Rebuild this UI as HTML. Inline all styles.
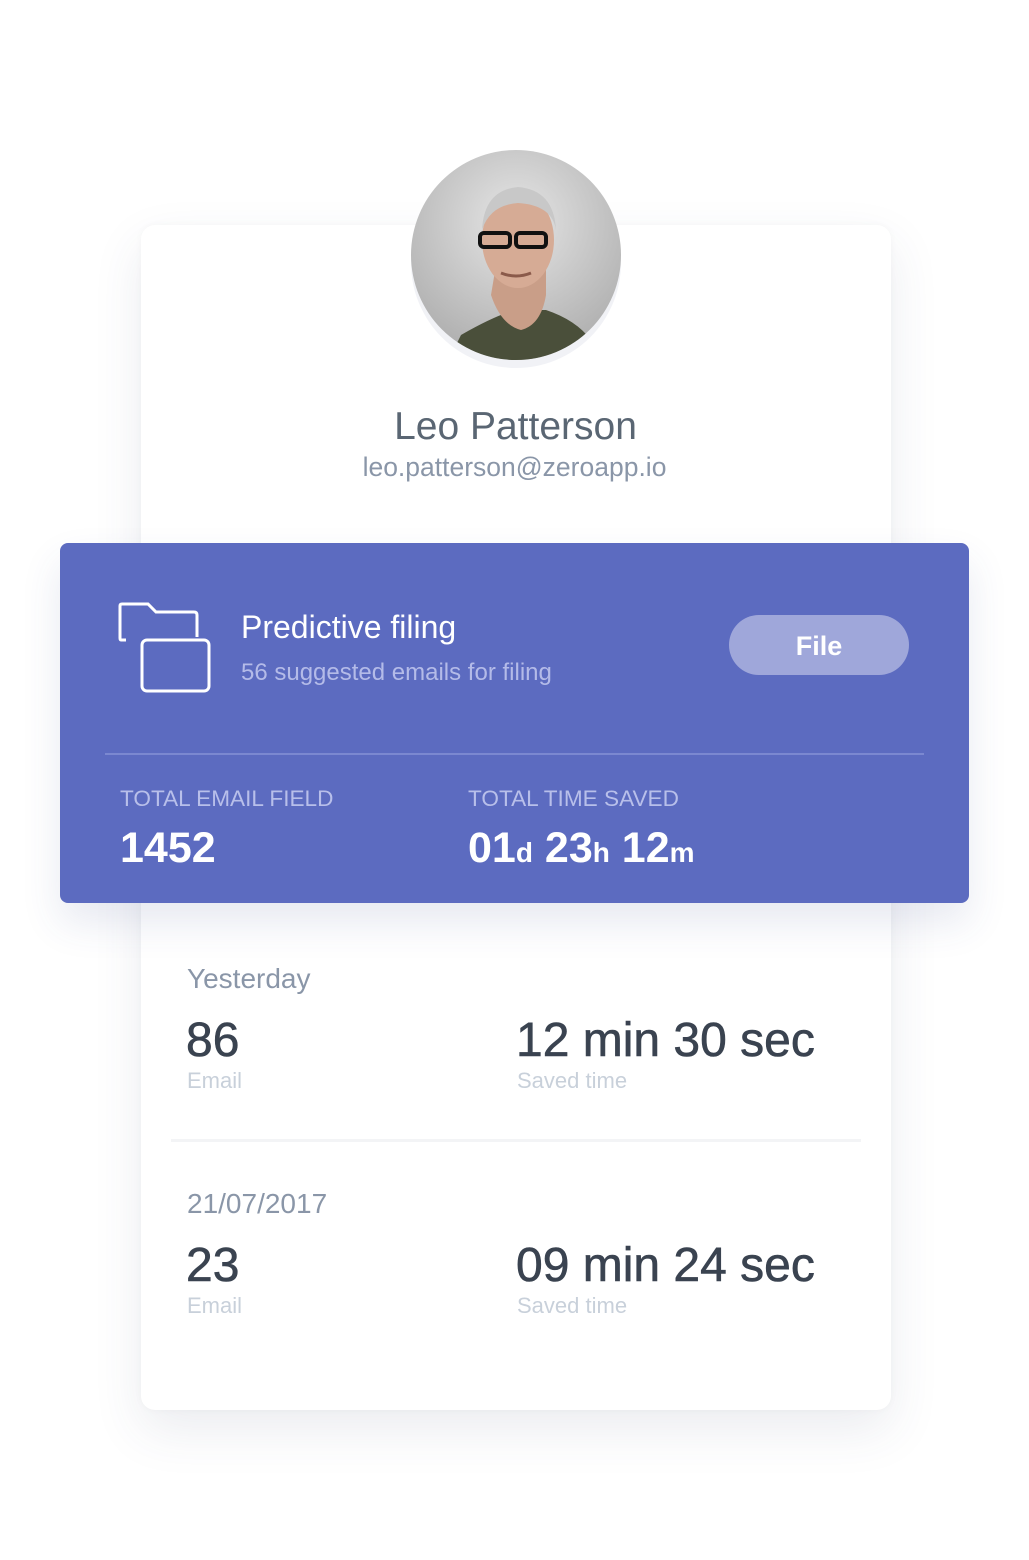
<!DOCTYPE html>
<html><head><style>
*{margin:0;padding:0;box-sizing:border-box}
body{width:1029px;height:1560px;background:#fff;position:relative;font-family:"Liberation Sans",sans-serif;overflow:hidden}
.a{position:absolute;white-space:nowrap}
.card{position:absolute;left:141px;top:225px;width:750px;height:1185px;background:#fff;border-radius:14px;box-shadow:0 20px 50px rgba(60,70,110,0.10),0 0 8px rgba(0,0,0,0.03)}
.blue{position:absolute;left:60px;top:543px;width:909px;height:360px;background:#5c6bc0;border-radius:8px;box-shadow:0 20px 40px rgba(60,70,140,0.12)}
.big{font-size:48px;color:#3a4350;letter-spacing:0px;-webkit-text-stroke:0.6px #3a4350}
.lbl{font-size:22px;color:#c8d0da}
.dt{font-size:28px;color:#8a96a8}
</style></head><body>
<div class="card"></div>
<svg class="a" style="left:406px;top:145px" width="220" height="230" viewBox="0 0 220 230">
<defs><radialGradient id="g" cx="0.5" cy="0.35" r="0.7"><stop offset="0" stop-color="#e6e6e6"/><stop offset="1" stop-color="#a9a9a9"/></radialGradient>
<clipPath id="c"><circle cx="110" cy="110" r="105"/></clipPath></defs>
<circle cx="110" cy="118" r="105" fill="rgba(80,90,140,0.08)"/>
<g clip-path="url(#c)">
<rect width="220" height="220" fill="url(#g)"/>
<path d="M40 220 L55 190 Q90 170 110 165 L140 165 Q170 175 185 195 L190 220Z" fill="#4a4f3a"/>
<path d="M85 150 Q95 180 115 185 Q135 180 140 150 L140 120 L90 120Z" fill="#c99e88"/>
<ellipse cx="112" cy="95" rx="36" ry="48" fill="#d6ab95"/>
<path d="M76 85 Q78 45 112 42 Q148 45 150 85 Q146 60 112 58 Q84 60 76 85Z" fill="#c8c8c8"/>
<rect x="74" y="88" width="30" height="14" rx="4" fill="none" stroke="#111" stroke-width="4"/>
<rect x="110" y="88" width="30" height="14" rx="4" fill="none" stroke="#111" stroke-width="4"/>
<path d="M95 128 Q110 134 125 128" stroke="#8a5a4a" stroke-width="3" fill="none"/>
</g></svg>
<div class="a" style="left:0;width:1031px;text-align:center;top:405px;font-size:39px;color:#5a6673">Leo Patterson</div>
<div class="a" style="left:0;width:1029px;text-align:center;top:452px;font-size:26.5px;color:#8a96a8">leo.patterson@zeroapp.io</div>
<div class="blue"></div>
<svg class="a" style="left:118px;top:602px" width="94" height="92" viewBox="0 0 94 92">
<path d="M8 38 L3 38 Q2 38 2 36 L2 4 Q2 2 4 2 L30 2 L38 10 L76 10 Q79 10 79 13 L79 35" fill="none" stroke="#fff" stroke-width="3"/>
<rect x="24" y="38" width="67" height="51" rx="5" fill="none" stroke="#fff" stroke-width="3"/>
</svg>
<div class="a" style="left:241px;top:609px;font-size:32px;color:#fff">Predictive filing</div>
<div class="a" style="left:241px;top:659px;font-size:24px;color:#b4bbe8">56 suggested emails for filing</div>
<div class="a" style="left:729px;top:615px;width:180px;height:60px;border-radius:30px;background:#9fa7da;color:#fff;font-size:27px;font-weight:bold;text-align:center;line-height:62px">File</div>
<div class="a" style="left:105px;top:753px;width:819px;height:2px;background:#7b88d0"></div>
<div class="a" style="left:120px;top:786px;font-size:22.6px;color:#b8bfea">TOTAL EMAIL FIELD</div>
<div class="a" style="left:468px;top:786px;font-size:22.6px;color:#b8bfea">TOTAL TIME SAVED</div>
<div class="a" style="left:120px;top:824px;font-size:43px;font-weight:bold;color:#fff">1452</div>
<div class="a" style="left:468px;top:824px;font-size:43px;font-weight:bold;color:#fff">01<span style="font-size:28px">d</span> 23<span style="font-size:28px">h</span> 12<span style="font-size:28px">m</span></div>
<div class="a dt" style="left:187px;top:963px">Yesterday</div>
<div class="a big" style="left:186px;top:1013px">86</div>
<div class="a big" style="left:516px;top:1013px">12 min 30 sec</div>
<div class="a lbl" style="left:187px;top:1068px">Email</div>
<div class="a lbl" style="left:517px;top:1068px">Saved time</div>
<div class="a" style="left:171px;top:1139px;width:690px;height:3px;background:#f3f4f6"></div>
<div class="a dt" style="left:187px;top:1188px">21/07/2017</div>
<div class="a big" style="left:186px;top:1238px">23</div>
<div class="a big" style="left:516px;top:1238px">09 min 24 sec</div>
<div class="a lbl" style="left:187px;top:1293px">Email</div>
<div class="a lbl" style="left:517px;top:1293px">Saved time</div>
</body></html>
